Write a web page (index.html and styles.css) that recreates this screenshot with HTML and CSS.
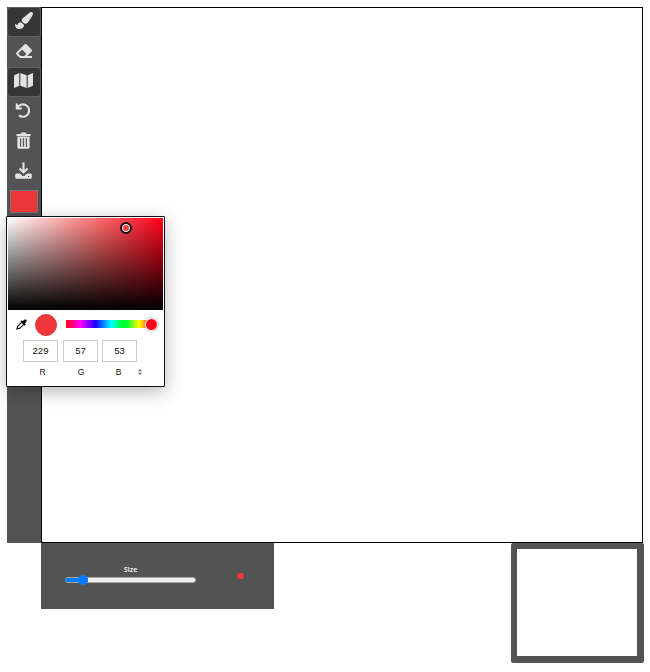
FILE: index.html
```html
<!DOCTYPE html>
<html lang="en">
<head>
<meta charset="utf-8">
<title>Drawing board</title>
<link rel="stylesheet" href="styles.css">
</head>
<body>
<main class="app">
  <div class="workspace">
    <nav class="toolbar">
      <button class="tool active" aria-label="Brush"><svg width="18" height="17" viewBox="0 0 512 512" preserveAspectRatio="none"><path d="M167.02 309.34c-40.12 2.58-76.53 17.86-97.19 72.3-2.35 6.21-8 9.98-14.59 9.98-11.11 0-45.46-27.67-55.25-34.35C0 439.62 37.93 512 128 512c75.86 0 128-43.77 128-120.19 0-3.11-.65-6.08-.97-9.13l-88.01-73.34zM457.89 0c-15.16 0-29.37 6.71-40.21 16.45C213.27 199.05 192 203.34 192 257.09c0 13.7 3.25 26.76 8.73 38.7l63.82 53.18c7.21 1.8 14.64 3.03 22.39 3.03 62.11 0 98.11-45.47 211.16-256.46 7.38-14.35 13.9-29.85 13.9-45.99C512 20.64 486 0 457.89 0z"/></svg></button>
      <button class="tool" aria-label="Eraser"><svg width="16" height="16" viewBox="0 0 512 512"><path d="M497.941 273.941c18.745-18.745 18.745-49.137 0-67.882l-160-160c-18.745-18.745-49.136-18.746-67.883 0l-256 256c-18.745 18.745-18.745 49.137 0 67.882l96 96A48.004 48.004 0 0 0 144 480h356c6.627 0 12-5.373 12-12v-40c0-6.627-5.373-12-12-12H355.883l142.058-142.059zm-302.627-62.627l137.373 137.373L265.373 416H150.628l-80-80 124.686-124.686z"/></svg></button>
      <button class="tool active" aria-label="Map"><svg width="19" height="17" viewBox="0 0 576 512"><path d="M0 117.66v346.32c0 11.32 11.43 19.06 21.94 14.86L160 416V32L20.12 87.95A32.006 32.006 0 0 0 0 117.66zM192 416l192 64V96L192 32v384zM554.06 33.16L416 96v384l139.88-55.95A31.996 31.996 0 0 0 576 394.34V48.02c0-11.32-11.43-19.06-21.94-14.86z"/></svg></button>
      <button class="tool" aria-label="Undo"><svg class="line" width="17" height="17" viewBox="0 0 17 17"><path d="M1.8 1.5v5h5M2.2 6.2A6.2 6.2 0 1 1 4 13.4"/></svg></button>
      <button class="tool" aria-label="Clear"><svg width="15" height="17" viewBox="0 0 15 17"><path fill-rule="evenodd" d="M.5 2h4l1-1.6h4l1 1.6h4v2H.5zM1.4 4.6h12.2v10.6q0 1.6-1.6 1.6H3q-1.6 0-1.6-1.6zM4 6.2v8.6h1.2V6.2zm2.9 0v8.6h1.2V6.2zm2.9 0v8.6H11V6.2z"/></svg></button>
      <button class="tool" aria-label="Download"><svg width="17" height="17" viewBox="0 0 17 17"><path class="arrow" d="M8.5 .5V10M4.4 6.4l4.1 4 4.1-4"/><path fill-rule="evenodd" d="M1.6 11.5h3.2l2.3 2.1q1.4 1 2.8 0l2.3-2.1h3.2q1.4 0 1.4 1.3v2.6q0 1.3-1.4 1.3H1.6Q.2 16.7.2 15.4v-2.6q0-1.3 1.4-1.3zM12.9 14v1h1.2v-1z"/></svg></button>
      <button class="swatch" aria-label="Color"></button>
    </nav>
    <div class="canvas"></div>
  </div>
  <div class="footer">
    <section class="brush-settings">
      <div class="size">
        <label>Size</label>
        <div class="track"><i class="fill"></i><i class="knob"></i></div>
      </div>
      <i class="preview"></i>
    </section>
    <div class="minimap"></div>
  </div>
</main>
<aside class="picker">
  <div class="shade"><i class="handle"></i></div>
  <div class="hue-row">
    <svg class="dropper" width="11" height="11" viewBox="0 0 13 13"><path class="barrel" d="M6.6 3.9 2 8.5 1.2 11.8l3.3-.8L9.1 6.4"/><path d="m5.2 2.9 1.4-1.4 1.3 1.3L9.6 1q1.3-1.1 2.5 0 1 1.2.1 2.5l-1.8 1.7 1.2 1.3-1.4 1.4z"/></svg>
    <i class="current"></i>
    <div class="hue"><i class="hue-knob"></i></div>
  </div>
  <div class="channels">
    <label><span class="value">229</span><span>R</span></label>
    <label><span class="value">57</span><span>G</span></label>
    <label><span class="value">53</span><span>B</span></label>
    <svg class="switch" width="4" height="6" viewBox="0 0 4 6"><path d="M0 2.3 2 0l2 2.3zM0 3.7h4L2 6z"/></svg>
  </div>
</aside>
</body>
</html>
```
FILE: styles.css
```css
* { box-sizing: border-box; }
body { margin: 0; background: #fff; font-family: "Liberation Sans", Arial, sans-serif; overflow: hidden; }
.app { padding: 7px 6px 0 7px; }
.workspace { display: flex; height: 536px; }
.toolbar { width: 34px; background: #535353; display: flex; flex-direction: column; align-items: center; }
.canvas { width: 602px; border: 1px solid #000; background: #fff; }
.tool { width: 34px; height: 30px; padding: 0 1px 3px 0; border: 1px solid transparent; border-radius: 3px; background: none; display: flex; align-items: center; justify-content: center; }
.tool.active { background: #363636; border-color: #5f5f5f; }
.tool svg { fill: #e2e2e2; flex: none; }
.tool .line, .tool .arrow { fill: none; stroke: #e2e2e2; stroke-width: 2.1; }
.swatch { width: 28px; height: 23px; margin-top: 3px; padding: 0; background: #ef373a; border: 1px solid #777; }
.footer { display: flex; justify-content: space-between; align-items: flex-start; margin-left: 34px; width: 603px; }
.brush-settings { width: 233px; height: 66px; background: #535353; display: flex; padding-left: 24px; }
.size { width: 131px; padding-top: 22px; display: flex; flex-direction: column; }
.size label { font: bold 7px/10px "Open Sans", sans-serif; color: #e2e2e2; text-align: center; }
.track { position: relative; height: 6px; margin-top: 2px; border: 1px solid #a5a5a5; border-radius: 3px; background: #efefef; }
.fill { position: absolute; left: -1px; top: 0; width: 23px; height: 4px; background: #087cff; border-radius: 2px 0 0 2px; }
.knob { position: absolute; left: 12px; top: -3px; width: 10px; height: 10px; border-radius: 50%; background: #087cff; }
.preview { width: 7px; height: 6px; margin: 30px 0 0 41px; border-radius: 50%; background: #ef373a; }
.minimap { width: 133px; height: 120px; border: solid #535353; border-width: 6px 7px 7px 6px; border-radius: 2px; background: #fff; }
.picker { position: absolute; left: 6px; top: 216px; width: 159px; height: 171px; padding: 1px; border: 1px solid #111; border-radius: 1px; background: #fff; box-shadow: 0 5px 18px rgba(0,0,0,.28); color: #111; }
.shade { position: relative; height: 92px; width: 155px; background: linear-gradient(to top, #000, transparent), linear-gradient(to right, #fff, #ff6b6b 59%, #ff001b); }
.handle { position: absolute; left: 112px; top: 4px; width: 12px; height: 12px; border-radius: 50%; background: #ed4145; border: 2px solid #111; box-shadow: inset 0 0 0 1px #fff; }
.hue-row { display: flex; height: 30px; padding: 4px 0 0 8px; }
.dropper { margin-top: 5px; }
.barrel { fill: none; stroke: #000; stroke-width: 1.4; }
.current { width: 22px; height: 22px; margin-left: 8px; border-radius: 50%; background: #ef373a; border: 1px solid #d43b3d; }
.hue { position: relative; width: 87px; height: 8px; margin: 6px 0 0 9px; background: linear-gradient(to right, #ff0018, #f0f 17%, #1a00ff 34%, #0ff 52%, #00ff35 64%, #00ff35 70%, #ff0 84%, #ff0018); }
.hue-knob { position: absolute; right: -4px; top: -1px; width: 11px; height: 11px; border-radius: 50%; background: #ff0018; box-shadow: 0 0 0 1px #fff, 0 0 2px 1px #777; }
.channels { display: flex; padding-left: 15px; }
.channels label { width: 35px; margin-right: 5px; display: flex; flex-direction: column; align-items: center; font-size: 8.5px; line-height: 10px; }
.channels label:nth-child(2) { margin-right: 4px; }
.channels label > span:last-child { margin: 5px 0 0 4px; }
.channels .value { width: 35px; height: 22px; border: 1px solid #ccc; text-align: center; font-size: 9.5px; line-height: 20px; }
.channels label:nth-child(3) { margin-right: 1px; }
.channels label:nth-child(2) > span:last-child { margin-left: 1px; }
.channels label:nth-child(3) > span:last-child { margin-left: -2px; }
.switch { margin-top: 29px; fill: #666; }
```
